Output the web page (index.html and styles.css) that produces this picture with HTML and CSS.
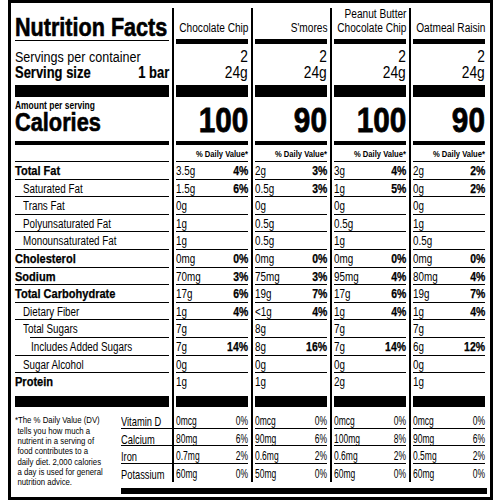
FILE: index.html
```html
<!DOCTYPE html>
<html lang="en">
  <head>
    <meta charset="UTF-8" />
    <title>Nutrition Facts</title>
    <link rel="stylesheet" href="styles.css">
  </head>
  <body>
    <div class="label">
      <div class="grid">
        <div class="side">
          <h1 class="title"><span class="sx">Nutrition Facts</span></h1>
          <div class="servings">
            <div class="line"><span class="sx">Servings per container</span></div>
            <div class="line size"><span class="sx">Serving size</span><span class="sx r">1 bar</span></div>
          </div>
          <div class="bar bar-lg"></div>
          <div class="cal">
            <div class="amount"><span class="sx">Amount per serving</span></div>
            <div class="cal-word"><span class="sx">Calories</span></div>
          </div>
          <div class="bar bar-md"></div>
          <div class="dv"></div>
          <div class="row bold"><span class="sx">Total Fat</span></div>
          <div class="row in1"><span class="sx">Saturated Fat</span></div>
          <div class="row in1"><span class="sx">Trans Fat</span></div>
          <div class="row in1"><span class="sx">Polyunsaturated Fat</span></div>
          <div class="row in1"><span class="sx">Monounsaturated Fat</span></div>
          <div class="row bold"><span class="sx">Cholesterol</span></div>
          <div class="row bold"><span class="sx">Sodium</span></div>
          <div class="row bold"><span class="sx">Total Carbohydrate</span></div>
          <div class="row in1"><span class="sx">Dietary Fiber</span></div>
          <div class="row in1 short"><span class="sx">Total Sugars</span></div>
          <div class="row in2"><span class="sx">Includes Added Sugars</span></div>
          <div class="row in1"><span class="sx">Sugar Alcohol</span></div>
          <div class="row bold last"><span class="sx">Protein</span></div>
          <div class="bar bar-sm"></div>
          <div class="foot">
            <p class="note">*The % Daily Value (DV)<br>tells you how much a<br>nutrient in a serving of<br>food contributes to a<br>daily diet. 2,000 calories<br>a day is used for general<br>nutrition advice.</p>
            <div class="vits">
              <div class="vrow"><span class="sx">Vitamin D</span></div>
              <div class="vrow"><span class="sx">Calcium</span></div>
              <div class="vrow"><span class="sx">Iron</span></div>
              <div class="vrow"><span class="sx">Potassium</span></div>
            </div>
          </div>
        </div>

        <div class="col">
          <div class="col-head"><span class="sx r">Chocolate Chip</span></div>
          <div class="servings num">
            <div class="line"><span class="sx r">2</span></div>
            <div class="line"><span class="sx r">24g</span></div>
          </div>
          <div class="bar bar-lg"></div>
          <div class="cal cal-num"><span class="sx r">100</span></div>
          <div class="bar bar-md"></div>
          <div class="dv"><span class="sx r">% Daily Value*</span></div>
          <div class="row"><span class="sx">3.5g</span><span class="sx r pct">4%</span></div>
          <div class="row"><span class="sx">1.5g</span><span class="sx r pct">6%</span></div>
          <div class="row"><span class="sx">0g</span></div>
          <div class="row"><span class="sx">1g</span></div>
          <div class="row"><span class="sx">1g</span></div>
          <div class="row"><span class="sx">0mg</span><span class="sx r pct">0%</span></div>
          <div class="row"><span class="sx">70mg</span><span class="sx r pct">3%</span></div>
          <div class="row"><span class="sx">17g</span><span class="sx r pct">6%</span></div>
          <div class="row"><span class="sx">1g</span><span class="sx r pct">4%</span></div>
          <div class="row"><span class="sx">7g</span></div>
          <div class="row"><span class="sx">7g</span><span class="sx r pct">14%</span></div>
          <div class="row"><span class="sx">0g</span></div>
          <div class="row last"><span class="sx">1g</span></div>
          <div class="bar bar-sm"></div>
          <div class="vits">
            <div class="vrow"><span class="sx">0mcg</span><span class="sx r">0%</span></div>
            <div class="vrow"><span class="sx">80mg</span><span class="sx r">6%</span></div>
            <div class="vrow"><span class="sx">0.7mg</span><span class="sx r">2%</span></div>
            <div class="vrow"><span class="sx">60mg</span><span class="sx r">0%</span></div>
          </div>
        </div>

        <div class="col">
          <div class="col-head"><span class="sx r">S'mores</span></div>
          <div class="servings num">
            <div class="line"><span class="sx r">2</span></div>
            <div class="line"><span class="sx r">24g</span></div>
          </div>
          <div class="bar bar-lg"></div>
          <div class="cal cal-num"><span class="sx r">90</span></div>
          <div class="bar bar-md"></div>
          <div class="dv"><span class="sx r">% Daily Value*</span></div>
          <div class="row"><span class="sx">2g</span><span class="sx r pct">3%</span></div>
          <div class="row"><span class="sx">0.5g</span><span class="sx r pct">3%</span></div>
          <div class="row"><span class="sx">0g</span></div>
          <div class="row"><span class="sx">0.5g</span></div>
          <div class="row"><span class="sx">0.5g</span></div>
          <div class="row"><span class="sx">0mg</span><span class="sx r pct">0%</span></div>
          <div class="row"><span class="sx">75mg</span><span class="sx r pct">3%</span></div>
          <div class="row"><span class="sx">19g</span><span class="sx r pct">7%</span></div>
          <div class="row"><span class="sx">&lt;1g</span><span class="sx r pct">4%</span></div>
          <div class="row"><span class="sx">8g</span></div>
          <div class="row"><span class="sx">8g</span><span class="sx r pct">16%</span></div>
          <div class="row"><span class="sx">0g</span></div>
          <div class="row last"><span class="sx">1g</span></div>
          <div class="bar bar-sm"></div>
          <div class="vits">
            <div class="vrow"><span class="sx">0mcg</span><span class="sx r">0%</span></div>
            <div class="vrow"><span class="sx">90mg</span><span class="sx r">6%</span></div>
            <div class="vrow"><span class="sx">0.6mg</span><span class="sx r">2%</span></div>
            <div class="vrow"><span class="sx">50mg</span><span class="sx r">0%</span></div>
          </div>
        </div>

        <div class="col">
          <div class="col-head">
            <div class="head-lines">
              <span class="sx r">Peanut Butter</span>
              <span class="sx r">Chocolate Chip</span>
            </div>
          </div>
          <div class="servings num">
            <div class="line"><span class="sx r">2</span></div>
            <div class="line"><span class="sx r">24g</span></div>
          </div>
          <div class="bar bar-lg"></div>
          <div class="cal cal-num"><span class="sx r">100</span></div>
          <div class="bar bar-md"></div>
          <div class="dv"><span class="sx r">% Daily Value*</span></div>
          <div class="row"><span class="sx">3g</span><span class="sx r pct">4%</span></div>
          <div class="row"><span class="sx">1g</span><span class="sx r pct">5%</span></div>
          <div class="row"><span class="sx">0g</span></div>
          <div class="row"><span class="sx">0.5g</span></div>
          <div class="row"><span class="sx">1g</span></div>
          <div class="row"><span class="sx">0mg</span><span class="sx r pct">0%</span></div>
          <div class="row"><span class="sx">95mg</span><span class="sx r pct">4%</span></div>
          <div class="row"><span class="sx">17g</span><span class="sx r pct">6%</span></div>
          <div class="row"><span class="sx">1g</span><span class="sx r pct">4%</span></div>
          <div class="row"><span class="sx">7g</span></div>
          <div class="row"><span class="sx">7g</span><span class="sx r pct">14%</span></div>
          <div class="row"><span class="sx">0g</span></div>
          <div class="row last"><span class="sx">2g</span></div>
          <div class="bar bar-sm"></div>
          <div class="vits">
            <div class="vrow"><span class="sx">0mcg</span><span class="sx r">0%</span></div>
            <div class="vrow"><span class="sx">100mg</span><span class="sx r">8%</span></div>
            <div class="vrow"><span class="sx">0.6mg</span><span class="sx r">2%</span></div>
            <div class="vrow"><span class="sx">60mg</span><span class="sx r">0%</span></div>
          </div>
        </div>

        <div class="col">
          <div class="col-head"><span class="sx r">Oatmeal Raisin</span></div>
          <div class="servings num">
            <div class="line"><span class="sx r">2</span></div>
            <div class="line"><span class="sx r">24g</span></div>
          </div>
          <div class="bar bar-lg"></div>
          <div class="cal cal-num"><span class="sx r">90</span></div>
          <div class="bar bar-md"></div>
          <div class="dv"><span class="sx r">% Daily Value*</span></div>
          <div class="row"><span class="sx">2g</span><span class="sx r pct">2%</span></div>
          <div class="row"><span class="sx">0g</span><span class="sx r pct">2%</span></div>
          <div class="row"><span class="sx">0g</span></div>
          <div class="row"><span class="sx">1g</span></div>
          <div class="row"><span class="sx">0.5g</span></div>
          <div class="row"><span class="sx">0mg</span><span class="sx r pct">0%</span></div>
          <div class="row"><span class="sx">80mg</span><span class="sx r pct">4%</span></div>
          <div class="row"><span class="sx">19g</span><span class="sx r pct">7%</span></div>
          <div class="row"><span class="sx">1g</span><span class="sx r pct">4%</span></div>
          <div class="row"><span class="sx">7g</span></div>
          <div class="row"><span class="sx">6g</span><span class="sx r pct">12%</span></div>
          <div class="row"><span class="sx">0g</span></div>
          <div class="row last"><span class="sx">1g</span></div>
          <div class="bar bar-sm"></div>
          <div class="vits">
            <div class="vrow"><span class="sx">0mcg</span><span class="sx r">0%</span></div>
            <div class="vrow"><span class="sx">90mg</span><span class="sx r">6%</span></div>
            <div class="vrow"><span class="sx">0.5mg</span><span class="sx r">2%</span></div>
            <div class="vrow"><span class="sx">60mg</span><span class="sx r">0%</span></div>
          </div>
        </div>
      </div>
      <div class="end-bar"></div>
    </div>
  </body>
</html>
```

FILE: styles.css
```css
body {
  margin: 0;
  background-color: #ffffff;
  color: #000000;
  font-family: "Liberation Sans", Arial, sans-serif;
}
/* the label face is a condensed sans, so text is squeezed sideways */
.sx {
  --sx: 0.82;
  display: inline-block;
  white-space: nowrap;
  transform: scaleX(var(--sx));
  transform-origin: left center;
}
.sx.r {
  transform-origin: right center;
  text-align: right;
}
.label {
  margin-left: 8px;
  width: 485px;
  height: 500px;
  box-sizing: border-box;
  border: 3px solid #000;
}
.grid {
  display: grid;
  grid-template-columns: 161px repeat(4, 79px);
  margin-top: 5px;
}
.side {
  padding: 0 3px 0 4px;
}
.col {
  border-left: 2px solid #000;
  padding: 0 3px 0 2px;
}
.title {
  margin: 0 0 3px 0;
  height: 33px;
  box-sizing: border-box;
  padding-top: 6px;
  border-bottom: 1px solid #000;
  font-size: 26px;
  line-height: 26px;
  font-weight: bold;
  -webkit-text-stroke: 0.6px #000;
}
.title .sx {
  --sx: 0.83;
}
.col-head {
  height: 36px;
  box-sizing: border-box;
  border-bottom: 5px solid #000;
  padding-bottom: 4px;
  display: flex;
  justify-content: flex-end;
  align-items: flex-end;
  font-size: 12.5px;
  line-height: 14px;
}
.col-head .sx {
  --sx: 0.81;
}
.head-lines {
  display: flex;
  flex-direction: column;
  align-items: flex-end;
}
.servings {
  height: 41px;
  box-sizing: border-box;
  padding-top: 5px;
  font-size: 15.5px;
  line-height: 16px;
}
.servings .sx {
  --sx: 0.81;
}
.line {
  display: flex;
}
.servings.num {
  font-size: 16px;
}
.servings.num .line {
  justify-content: flex-end;
}
.servings.num .sx {
  --sx: 0.86;
}
.size {
  justify-content: space-between;
  font-size: 16px;
  font-weight: bold;
  -webkit-text-stroke: 0.2px #000;
}
.bar {
  background-color: #000;
}
.bar-lg {
  height: 12px;
}
.bar-md {
  height: 4px;
}
.bar-sm {
  height: 11px;
}
.cal {
  height: 44px;
  box-sizing: border-box;
  padding-top: 4px;
}
.amount {
  font-size: 10px;
  line-height: 10px;
  font-weight: bold;
}
.amount .sx {
  --sx: 0.845;
}
.cal-word {
  margin-top: 1px;
  font-size: 25px;
  line-height: 20px;
  font-weight: bold;
  -webkit-text-stroke: 0.6px #000;
}
.cal-word .sx {
  --sx: 0.87;
}
.cal-num {
  display: flex;
  justify-content: flex-end;
  padding-top: 5px;
  font-size: 35px;
  line-height: 36px;
  font-weight: bold;
  -webkit-text-stroke: 0.8px #000;
}
.cal-num .sx {
  --sx: 0.85;
}
.dv {
  display: flex;
  justify-content: flex-end;
  height: 17px;
  box-sizing: border-box;
  padding-top: 2px;
  border-bottom: 1px solid #000;
  font-size: 9.5px;
  line-height: 14px;
  font-weight: bold;
}
.dv .sx {
  --sx: 0.8;
}
.row {
  height: 17.6px;
  box-sizing: border-box;
  padding-top: 2px;
  border-bottom: 1px solid #000;
  display: flex;
  justify-content: space-between;
  font-size: 12px;
  line-height: 14.6px;
}
.row.last {
  height: 22.8px;
  border-bottom: none;
}
.row.bold,
.pct {
  font-weight: bold;
  -webkit-text-stroke: 0.25px #000;
}
.row.bold .sx {
  --sx: 0.92;
}
.row .sx.pct {
  --sx: 0.87;
}
.row.in1 {
  padding-left: 8px;
}
.row.in2 {
  padding-left: 16px;
}
.row.short {
  border-bottom: none;
  background: linear-gradient(#000, #000) right bottom / calc(100% - 15px) 1px no-repeat;
}
.foot {
  display: flex;
  height: 75px;
}
.note {
  flex: none;
  width: 106px;
  margin: 0;
  box-sizing: border-box;
  padding: 8.5px 0 0 3px;
  text-indent: -3px;
  font-size: 9.5px;
  line-height: 10.3px;
  white-space: nowrap;
  transform: scaleX(0.82);
  transform-origin: left top;
}
.vits {
  flex: 1;
  padding-top: 4.5px;
}
.vrow {
  height: 17.5px;
  box-sizing: border-box;
  padding-top: 4px;
  border-bottom: 1px solid #000;
  display: flex;
  justify-content: space-between;
  font-size: 12.5px;
  line-height: 13.5px;
}
.vrow .sx {
  --sx: 0.68;
}
.side .vrow {
  font-size: 13.5px;
}
.side .vrow .sx {
  --sx: 0.69;
}
.vrow:last-child {
  border-bottom: none;
}
.end-bar {
  height: 6px;
  margin: 6px 3px 0 110px;
  background-color: #000;
}
```
